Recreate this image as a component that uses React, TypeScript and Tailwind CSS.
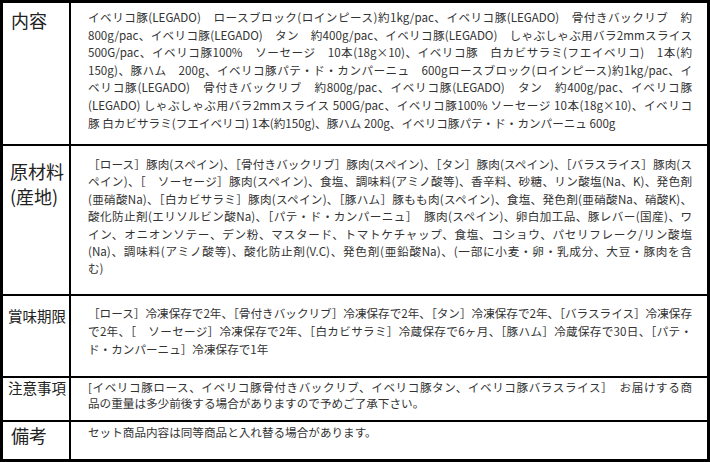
const font = { fontFamily: '"Noto Sans CJK JP", "Noto Sans", sans-serif' };

type Row = {
  label: string[];
  lines: string[];
  h: string;
  labelCls: string;
  textPad: string;
  leading: string;
};

const rows: Row[] = [
  {
    label: ["内容"],
    h: "h-[143px]",
    labelCls: "pt-[5px] pl-[8px] text-[18px] leading-[24px]",
    textPad: "pt-[6px]",
    leading: "leading-[17.6px]",
    lines: [
      "イベリコ豚(LEGADO)　ロースブロック(ロインピース)約1kg/pac、イベリコ豚(LEGADO)　骨付きバックリブ　約",
      "800g/pac、イベリコ豚(LEGADO)　タン　約400g/pac、イベリコ豚(LEGADO)　しゃぶしゃぶ用バラ2mmスライス",
      "500G/pac、イベリコ豚100%　ソーセージ　10本(18g×10)、イベリコ豚　白カビサラミ(フエイベリコ)　1本(約",
      "150g)、豚ハム　200g、イベリコ豚パテ・ド・カンパーニュ　600gロースブロック(ロインピース)約1kg/pac、イ",
      "ベリコ豚(LEGADO)　骨付きバックリブ　約800g/pac、イベリコ豚(LEGADO)　タン　約400g/pac、イベリコ豚",
      "(LEGADO) しゃぶしゃぶ用バラ2mmスライス 500G/pac、イベリコ豚100% ソーセージ 10本(18g×10)、イベリコ",
      "豚 白カビサラミ(フエイベリコ) 1本(約150g)、豚ハム 200g、イベリコ豚パテ・ド・カンパーニュ 600g",
    ],
  },
  {
    label: ["原材料", "(産地)"],
    h: "h-[150px]",
    labelCls: "pt-[13px] pl-[7px] text-[18px] leading-[25px]",
    textPad: "pt-[10px]",
    leading: "leading-[17.4px]",
    lines: [
      "［ロース］豚肉(スペイン)、［骨付きバックリブ］豚肉(スペイン)、［タン］豚肉(スペイン)、［バラスライス］豚肉(ス",
      "ペイン)、［　ソーセージ］豚肉(スペイン)、食塩、調味料(アミノ酸等)、香辛料、砂糖、リン酸塩(Na、K)、発色剤",
      "(亜硝酸Na)、［白カビサラミ］豚肉(スペイン)、［豚ハム］豚もも肉(スペイン)、食塩、発色剤(亜硝酸Na、硝酸K)、",
      "酸化防止剤(エリソルビン酸Na)、［パテ・ド・カンパーニュ］　豚肉(スペイン)、卵白加工品、豚レバー(国産)、ワ",
      "イン、オニオンソテー、デン粉、マスタード、トマトケチャップ、食塩、コショウ、パセリフレーク/リン酸塩",
      "(Na)、調味料(アミノ酸等)、酸化防止剤(V.C)、発色剤(亜鉛酸Na)、(一部に小麦・卵・乳成分、大豆・豚肉を含",
      "む)",
    ],
  },
  {
    label: ["賞味期限"],
    h: "h-[82px]",
    labelCls: "pt-[10px] pl-[5px] text-[14.5px] leading-[20px]",
    textPad: "pt-[8px]",
    leading: "leading-[18px]",
    lines: [
      "［ロース］冷凍保存で2年、［骨付きバックリブ］冷凍保存で2年、［タン］冷凍保存で2年、［バラスライス］冷凍保存",
      "で2年、［　ソーセージ］冷凍保存で2年、［白カビサラミ］冷蔵保存で6ヶ月、［豚ハム］冷蔵保存で30日、［パテ・",
      "ド・カンパーニュ］冷凍保存で1年",
    ],
  },
  {
    label: ["注意事項"],
    h: "h-[44px]",
    labelCls: "pt-0 pl-[5px] text-[14.5px] leading-[20px]",
    textPad: "pt-px",
    leading: "leading-[16px]",
    lines: [
      "[イベリコ豚ロース、イベリコ豚骨付きバックリブ、イベリコ豚タン、イベリコ豚バラスライス］　お届けする商",
      "品の重量は多少前後する場合がありますので予めご了承下さい。",
    ],
  },
  {
    label: ["備考"],
    h: "h-[37px]",
    labelCls: "pt-px pl-[8px] text-[18px] leading-[24px]",
    textPad: "pt-[2px]",
    leading: "leading-[17px]",
    lines: ["セット商品内容は同等商品と入れ替る場合があります。"],
  },
];

export default function App() {
  return (
    <div className="w-[710px] h-[462px] bg-white" style={font}>
      <div className="h-full border-[3px] border-black flex flex-col">
        {rows.map((row, i) => (
          <div
            key={row.label[0]}
            className={`grid grid-cols-[68px_1fr] ${row.h} ${
              i < rows.length - 1 ? "border-b-2 border-black" : ""
            }`}
          >
            <div className={`border-r-2 border-black whitespace-nowrap text-[#222] ${row.labelCls}`}>
              {row.label.map((l) => (
                <div key={l}>{l}</div>
              ))}
            </div>
            <div className={`pl-[17px] pr-[15px] ${row.textPad} text-[11.6px] ${row.leading} text-[#333] overflow-hidden`}>
              {row.lines.map((l, j) => (
                <div
                  key={j}
                  className={j < row.lines.length - 1 && row.lines.length > 1 ? "[text-align-last:justify]" : ""}
                >
                  {l}
                </div>
              ))}
            </div>
          </div>
        ))}
      </div>
    </div>
  );
}
